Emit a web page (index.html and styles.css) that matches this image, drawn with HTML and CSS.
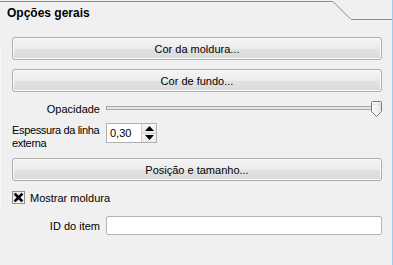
FILE: index.html
```html
<!DOCTYPE html>
<html lang="pt">
<head>
  <meta charset="UTF-8">
  <meta name="viewport" content="width=device-width, initial-scale=1.0">
  <title>Opções gerais</title>
  <link rel="stylesheet" href="styles.css">
</head>
<body>
<div class="panel">
  <div class="tabbar">
    <div class="tab">Opções gerais</div>
    <svg class="tab-slope" width="18" height="20" viewBox="0 0 18 20">
      <path d="M0 1.5 L17.5 19" stroke="#8c8c8c" stroke-width="1" fill="none"/>
    </svg>
    <div class="tab-rest"></div>
  </div>
  <div class="content">
    <button class="button first">Cor da moldura...</button>
    <button class="button">Cor de fundo...</button>

    <div class="row opacity-row">
      <span class="label right">Opacidade</span>
      <div class="slider">
        <div class="groove"></div>
        <svg class="handle" width="11" height="16" viewBox="0 0 11 16">
          <defs>
            <linearGradient id="hg" x1="0" y1="0" x2="1" y2="0">
              <stop offset="0" stop-color="#fbfbfb"/>
              <stop offset="1" stop-color="#e6e6e6"/>
            </linearGradient>
          </defs>
          <path d="M1.5 0.5 H9.5 Q10.5 0.5 10.5 1.5 V10.5 L5.5 15.5 L0.5 10.5 V1.5 Q0.5 0.5 1.5 0.5 Z" fill="url(#hg)" stroke="#7a7a7a"/>
          <path d="M3 3 V4 M8 3 V4" stroke="#b0b0b0"/>
        </svg>
      </div>
    </div>

    <div class="row spin-row">
      <span class="label wrap">Espessura da linha<br>externa</span>
      <div class="spinbox">
        <span class="spin-value">0,30</span>
        <div class="spin-buttons">
          <div class="spin-btn">
            <svg width="9" height="5" viewBox="0 0 9 5"><path d="M4.5 0 L9 5 H0 Z" fill="#000"/></svg>
          </div>
          <div class="spin-btn">
            <svg width="9" height="5" viewBox="0 0 9 5"><path d="M0 0 H9 L4.5 5 Z" fill="#000"/></svg>
          </div>
        </div>
      </div>
    </div>

    <button class="button third">Posição e tamanho...</button>

    <div class="check-row">
      <span class="checkbox">
        <svg width="11" height="11" viewBox="0 0 11 11">
          <path d="M2.5 2.5 L8.5 8.5 M8.5 2.5 L2.5 8.5" stroke="#000" stroke-width="2.6" stroke-linecap="square"/>
        </svg>
      </span>
      <span>Mostrar moldura</span>
    </div>

    <div class="row id-row">
      <span class="label right">ID do item</span>
      <div class="textfield"></div>
    </div>
  </div>
</div>
</body>
</html>
```

FILE: styles.css
```css
body {
  margin: 0;
  padding: 0;
  background-color: #f0f0f0;
  font-family: "Liberation Sans", Arial, sans-serif;
  font-size: 11px;
  color: #000;
  width: 393px;
  height: 265px;
  overflow: hidden;
}
.panel {
  width: 392px;
  height: 265px;
  border-right: 1px solid #9ccbf0;
}
.tabbar {
  display: flex;
  height: 20px;
}
.tab {
  flex: 1;
  border-top: 1px solid #8c8c8c;
  margin-top: 1px;
  padding-left: 7px;
  padding-top: 4px;
  font-weight: bold;
  font-size: 12px;
}
.tab-slope {
  display: block;
}
.tab-rest {
  width: 41px;
  height: 19px;
  border-bottom: 1px solid #8c8c8c;
}
.content {
  position: relative;
  display: flex;
  flex-direction: column;
  padding: 0 10px 0 12px;
}
/* faint focus outline on the left edge */
.content::before {
  content: "";
  position: absolute;
  left: 0;
  top: 30px;
  height: 160px;
  border-left: 1px dotted #ffffff;
}
.button {
  height: 23px;
  border: 1px solid #acacac;
  border-radius: 3px;
  background: linear-gradient(#f4f4f4, #ececec 50%, #e2e2e2 51%, #dadada);
  box-shadow: inset 0 0 0 1px #fbfbfb;
  font-family: inherit;
  font-size: 11px;
  color: #000;
  padding: 0;
  margin-top: 9px;
}
.button.first {
  margin-top: 17px;
}
.button.third {
  margin-top: 8px;
}
.row {
  display: flex;
  gap: 6px;
}
.label {
  width: 88px;
  flex-shrink: 0;
}
.label.right {
  text-align: right;
}
.opacity-row {
  margin-top: 9px;
  height: 16px;
  align-items: center;
}
.slider {
  flex: 1;
  display: flex;
  align-items: flex-start;
  height: 16px;
}
.groove {
  flex: 1;
  height: 2px;
  margin-top: 5px;
  border: 1px solid #a6a6a6;
  background: #e6e6e6;
}
.handle {
  display: block;
  margin-left: -5px;
}
.spin-row {
  margin-top: 6px;
  align-items: flex-start;
}
.label.wrap {
  line-height: 13px;
  padding-top: 1px;
  white-space: nowrap;
  letter-spacing: -0.35px;
}
.spinbox {
  display: flex;
  width: 49px;
  height: 18px;
  border: 1px solid #b0b0b0;
  background: #fff;
}
.spin-value {
  flex: 1;
  padding-left: 3px;
  line-height: 18px;
}
.spin-buttons {
  display: flex;
  flex-direction: column;
  width: 14px;
  border-left: 1px solid #cfcfcf;
}
.spin-btn {
  flex: 1;
  display: flex;
  align-items: center;
  justify-content: center;
  background: linear-gradient(#f7f7f7, #e9e9e9);
}
.spin-btn + .spin-btn {
  border-top: 1px solid #cfcfcf;
}
.spin-btn svg {
  display: block;
}
.check-row {
  display: flex;
  align-items: center;
  gap: 5px;
  margin-top: 10px;
  height: 13px;
}
.checkbox {
  width: 11px;
  height: 11px;
  border: 1px solid #8e8f8f;
  background: linear-gradient(135deg, #e8e8e8, #fafafa);
  display: flex;
}
.id-row {
  margin-top: 12px;
  align-items: center;
}
.textfield {
  flex: 1;
  height: 17px;
  border: 1px solid #b5b5b5;
  border-radius: 2px;
  background: #fff;
}
```
